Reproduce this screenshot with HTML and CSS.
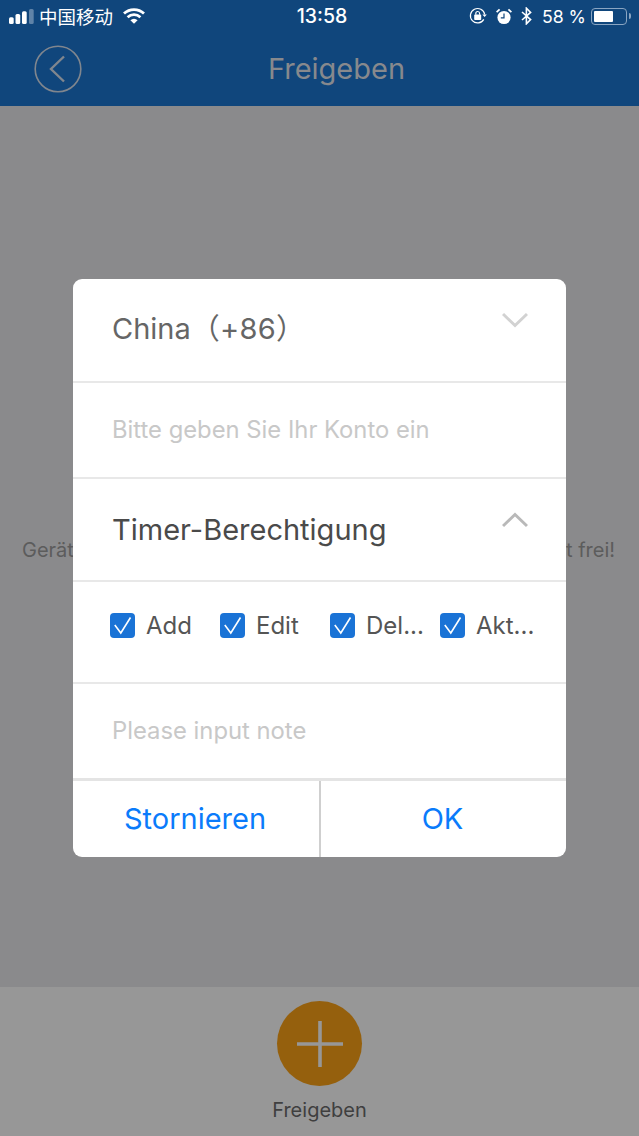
FILE: index.html
```html
<!DOCTYPE html>
<html lang="de">
<head>
    <meta charset="UTF-8">
    <meta name="viewport" content="width=device-width, initial-scale=1.0">
    <title>Freigeben</title>
    <link rel="stylesheet" href="styles.css">
</head>
<body>
    <div id="page">
        <header id="header">
            <div id="statusbar">
                <div class="status-left">
                    <svg class="signal" width="25" height="18" viewBox="0 0 25 18">
                        <rect x="0" y="10.300" width="4.700" height="6.700" rx="1.500" fill="#fff"/>
                        <rect x="6.500" y="7" width="4.700" height="10" rx="1.500" fill="#fff"/>
                        <rect x="13" y="4.300" width="4.700" height="12.700" rx="1.500" fill="#fff"/>
                        <rect x="20" y="2" width="4.700" height="15" rx="1.500" fill="#5f83a8"/>
                    </svg>
                    <span class="carrier">中国移动</span>
                    <svg class="wifi" width="22" height="16" viewBox="0 0 22 16">
                        <path d="M1 5.600a14.500 14.500 0 0 1 20 0" fill="none" stroke="#fff" stroke-width="2.800"/>
                        <path d="M4.600 9.200a9.500 9.500 0 0 1 12.800 0" fill="none" stroke="#fff" stroke-width="2.800"/>
                        <path d="M7.400 12.200l3.600 3.600 3.600-3.600a5 5 0 0 0-7.200 0z" fill="#fff"/>
                    </svg>
                </div>
                <div class="status-time">13:58</div>
                <div class="status-right">
                    <svg width="18" height="18" viewBox="0 0 18 18">
                        <path d="M14.800 12.400A7.200 7.200 0 1 1 15.700 7.500" fill="none" stroke="#fff" stroke-width="1.200"/>
                        <path d="M13.400 7.400h4.400l-2.200 2.600z" fill="#fff"/>
                        <rect x="5.200" y="7.600" width="7" height="5.400" rx="0.800" fill="#fff"/>
                        <path d="M6.800 7.800V6.400a1.900 1.900 0 0 1 3.800 0v1.400" fill="none" stroke="#fff" stroke-width="1.200"/>
                    </svg>
                    <svg class="alarm" width="16" height="17" viewBox="0 0 16 17">
                        <circle cx="8" cy="9.500" r="6.600" fill="#fff"/>
                        <path d="M8 5.500v4.400H4.800" fill="none" stroke="#10467c" stroke-width="1.200"/>
                        <path d="M0.600 4.200L3.600 1.400M15.400 4.200L12.400 1.400" stroke="#fff" stroke-width="1.800"/>
                    </svg>
                    <svg class="bluetooth" width="11" height="18" viewBox="0 0 11 18">
                        <path d="M1 5l8.600 7.600L5.400 16.800V1.200l4.200 4.200L1 13" fill="none" stroke="#fff" stroke-width="1.600"/>
                    </svg>
                    <span class="battery-text">58 %</span>
                    <div class="battery">
                        <div class="battery-level"></div>
                    </div>
                    <div class="battery-tip"></div>
                </div>
            </div>
            <div id="navbar">
                <svg class="back" width="48" height="48" viewBox="0 0 48 48">
                    <circle cx="24" cy="24" r="22.800" fill="none" stroke="#80868e" stroke-width="1.600"/>
                    <path d="M30 11.500L17 24l13 12.500" fill="none" stroke="#80868e" stroke-width="2.400"/>
                </svg>
                <div class="nav-title">Freigeben</div>
            </div>
        </header>

        <main id="main">
            <span class="empty-text">Gerät</span>
            <span class="empty-text">t frei!</span>
        </main>

        <footer id="footer">
            <button class="add-button">
                <svg width="46" height="46" viewBox="0 0 46 46">
                    <path d="M0 23h46M23 0v46" stroke="#979797" stroke-width="3.600"/>
                </svg>
            </button>
            <div class="add-label">Freigeben</div>
        </footer>
    </div>

    <div id="dialog">
        <div class="row row-select">
            <span class="select-text muted">China<span class="paren">（+86）</span></span>
            <svg class="chevron" width="26" height="16" viewBox="0 0 26 16">
                <path d="M1 2l12 11.500L25 2" fill="none" stroke="#d2d2d2" stroke-width="3"/>
            </svg>
        </div>
        <div class="row row-input">Bitte geben Sie Ihr Konto ein</div>
        <div class="row row-select row-timer">
            <span class="select-text">Timer-Berechtigung</span>
            <svg class="chevron" width="26" height="16" viewBox="0 0 26 16">
                <path d="M1 14L13 2.500 25 14" fill="none" stroke="#b9b9b9" stroke-width="3"/>
            </svg>
        </div>
        <div class="row row-checks">
            <div class="check">
                <svg width="25" height="25" viewBox="0 0 25 25"><rect width="25" height="25" rx="4" fill="#1a73d6"/><path d="M4.800 12l6 8L20.500 4.500" fill="none" stroke="#fff" stroke-width="1.600"/></svg>
                <span>Add</span>
            </div>
            <div class="check">
                <svg width="25" height="25" viewBox="0 0 25 25"><rect width="25" height="25" rx="4" fill="#1a73d6"/><path d="M4.800 12l6 8L20.500 4.500" fill="none" stroke="#fff" stroke-width="1.600"/></svg>
                <span>Edit</span>
            </div>
            <div class="check">
                <svg width="25" height="25" viewBox="0 0 25 25"><rect width="25" height="25" rx="4" fill="#1a73d6"/><path d="M4.800 12l6 8L20.500 4.500" fill="none" stroke="#fff" stroke-width="1.600"/></svg>
                <span>Del...</span>
            </div>
            <div class="check">
                <svg width="25" height="25" viewBox="0 0 25 25"><rect width="25" height="25" rx="4" fill="#1a73d6"/><path d="M4.800 12l6 8L20.500 4.500" fill="none" stroke="#fff" stroke-width="1.600"/></svg>
                <span>Akt...</span>
            </div>
        </div>
        <div class="row row-input row-note">Please input note</div>
        <div class="dialog-buttons">
            <button class="dialog-button">Stornieren</button>
            <button class="dialog-button">OK</button>
        </div>
    </div>
</body>
</html>
```

FILE: styles.css
```css
* {
    box-sizing: border-box;
}
html, body {
    margin: 0;
    padding: 0;
    height: 100%;
}
body {
    font-family: Inter, "Noto Sans CJK SC", sans-serif;
    background-color: #8a8a8c;
    position: relative;
    overflow: hidden;
}
#page {
    display: flex;
    flex-direction: column;
    height: 1136px;
}
#header {
    background-color: #10467c;
    height: 106px;
    flex-shrink: 0;
}
#statusbar {
    display: grid;
    grid-template-columns: 1fr auto 1fr;
    align-items: center;
    height: 32px;
    padding: 0 0 0 9px;
    color: #fff;
}
.status-left {
    display: flex;
    align-items: center;
}
.carrier {
    font-size: 18.500px;
    margin-left: 5px;
    font-family: "Noto Sans CJK SC", sans-serif;
}
.wifi {
    margin-left: 10px;
}
.status-time {
    font-size: 19.500px;
    font-weight: 500;
    position: relative;
    left: -2px;
}
.status-right {
    display: flex;
    align-items: center;
    justify-content: flex-end;
    padding-right: 8px;
}
.alarm {
    margin-left: 9px;
}
.bluetooth {
    margin-left: 9px;
}
.battery-text {
    font-size: 17.700px;
    margin-left: 10px;
    margin-right: 5px;
}
.battery {
    width: 36px;
    height: 17px;
    border: 1px solid #8aa5c2;
    border-radius: 4px;
    padding: 2px;
}
.battery-level {
    width: 19px;
    height: 100%;
    background-color: #fff;
    border-radius: 1px;
}
.battery-tip {
    width: 2px;
    height: 6px;
    margin-left: 2px;
    background-color: #8aa5c2;
    border-radius: 0 2px 2px 0;
}
#navbar {
    position: relative;
    height: 74px;
    display: flex;
    align-items: center;
    justify-content: center;
}
.back {
    position: absolute;
    left: 34px;
    top: 13px;
}
.nav-title {
    color: #87898d;
    font-size: 29px;
    position: relative;
    left: 17px;
    top: -1px;
}
#main {
    flex: 1;
    display: flex;
    align-items: center;
    justify-content: space-between;
    padding: 0 24px 0 22px;
    background-color: #8a8a8c;
}
.empty-text {
    padding-top: 6px;
    color: #5c5c5c;
    font-size: 20px;
    white-space: nowrap;
}
#footer {
    height: 149px;
    flex-shrink: 0;
    background-color: #979797;
    display: flex;
    flex-direction: column;
    align-items: center;
    padding-top: 14px;
}
.add-button {
    width: 85px;
    height: 85px;
    padding: 0;
    border: none;
    border-radius: 50%;
    background-color: #95600d;
    display: flex;
    align-items: center;
    justify-content: center;
}
.add-label {
    margin-top: 12px;
    font-size: 20px;
    color: #3f3f3f;
}
#dialog {
    position: absolute;
    left: 73px;
    top: 279px;
    width: 493px;
    height: 578px;
    background-color: #fff;
    border-radius: 9px;
    overflow: hidden;
    display: flex;
    flex-direction: column;
}
.row {
    border-bottom: 2px solid #e8e8e8;
    padding-left: 39px;
    display: flex;
    align-items: center;
    flex-shrink: 0;
}
.row-select {
    height: 104px;
    justify-content: space-between;
    padding-right: 38px;
}
.row-timer {
    height: 103px;
}
.row-input {
    height: 96px;
    padding-bottom: 2px;
    font-size: 23.800px;
    color: #c8c8c8;
}
.row-note {
    border-bottom: 3px solid #e4e4e4;
    height: 97px;
}
.select-text {
    font-size: 29px;
    line-height: 34px;
    color: #4a4a4a;
}
.select-text.muted {
    color: #666;
    position: relative;
    top: -1px;
}
.paren {
    letter-spacing: 0.300px;
}
.chevron {
    position: relative;
    top: -10px;
}
.row-checks {
    height: 102px;
    align-items: flex-start;
    padding: 30px 0 0 37px;
}
.check {
    width: 110px;
    display: flex;
    align-items: center;
    font-size: 24px;
    line-height: 27px;
    color: #555;
}
.check span {
    margin-left: 11px;
}
.dialog-buttons {
    flex: 1;
    display: flex;
}
.dialog-button {
    flex: 1;
    background: none;
    border: none;
    padding: 0 2px 2px 0;
    font-family: inherit;
    font-size: 29px;
    color: #0a7bfb;
}
.dialog-button:first-child {
    border-right: 2px solid #cfcfcf;
    flex: 0 0 248px;
}
```
